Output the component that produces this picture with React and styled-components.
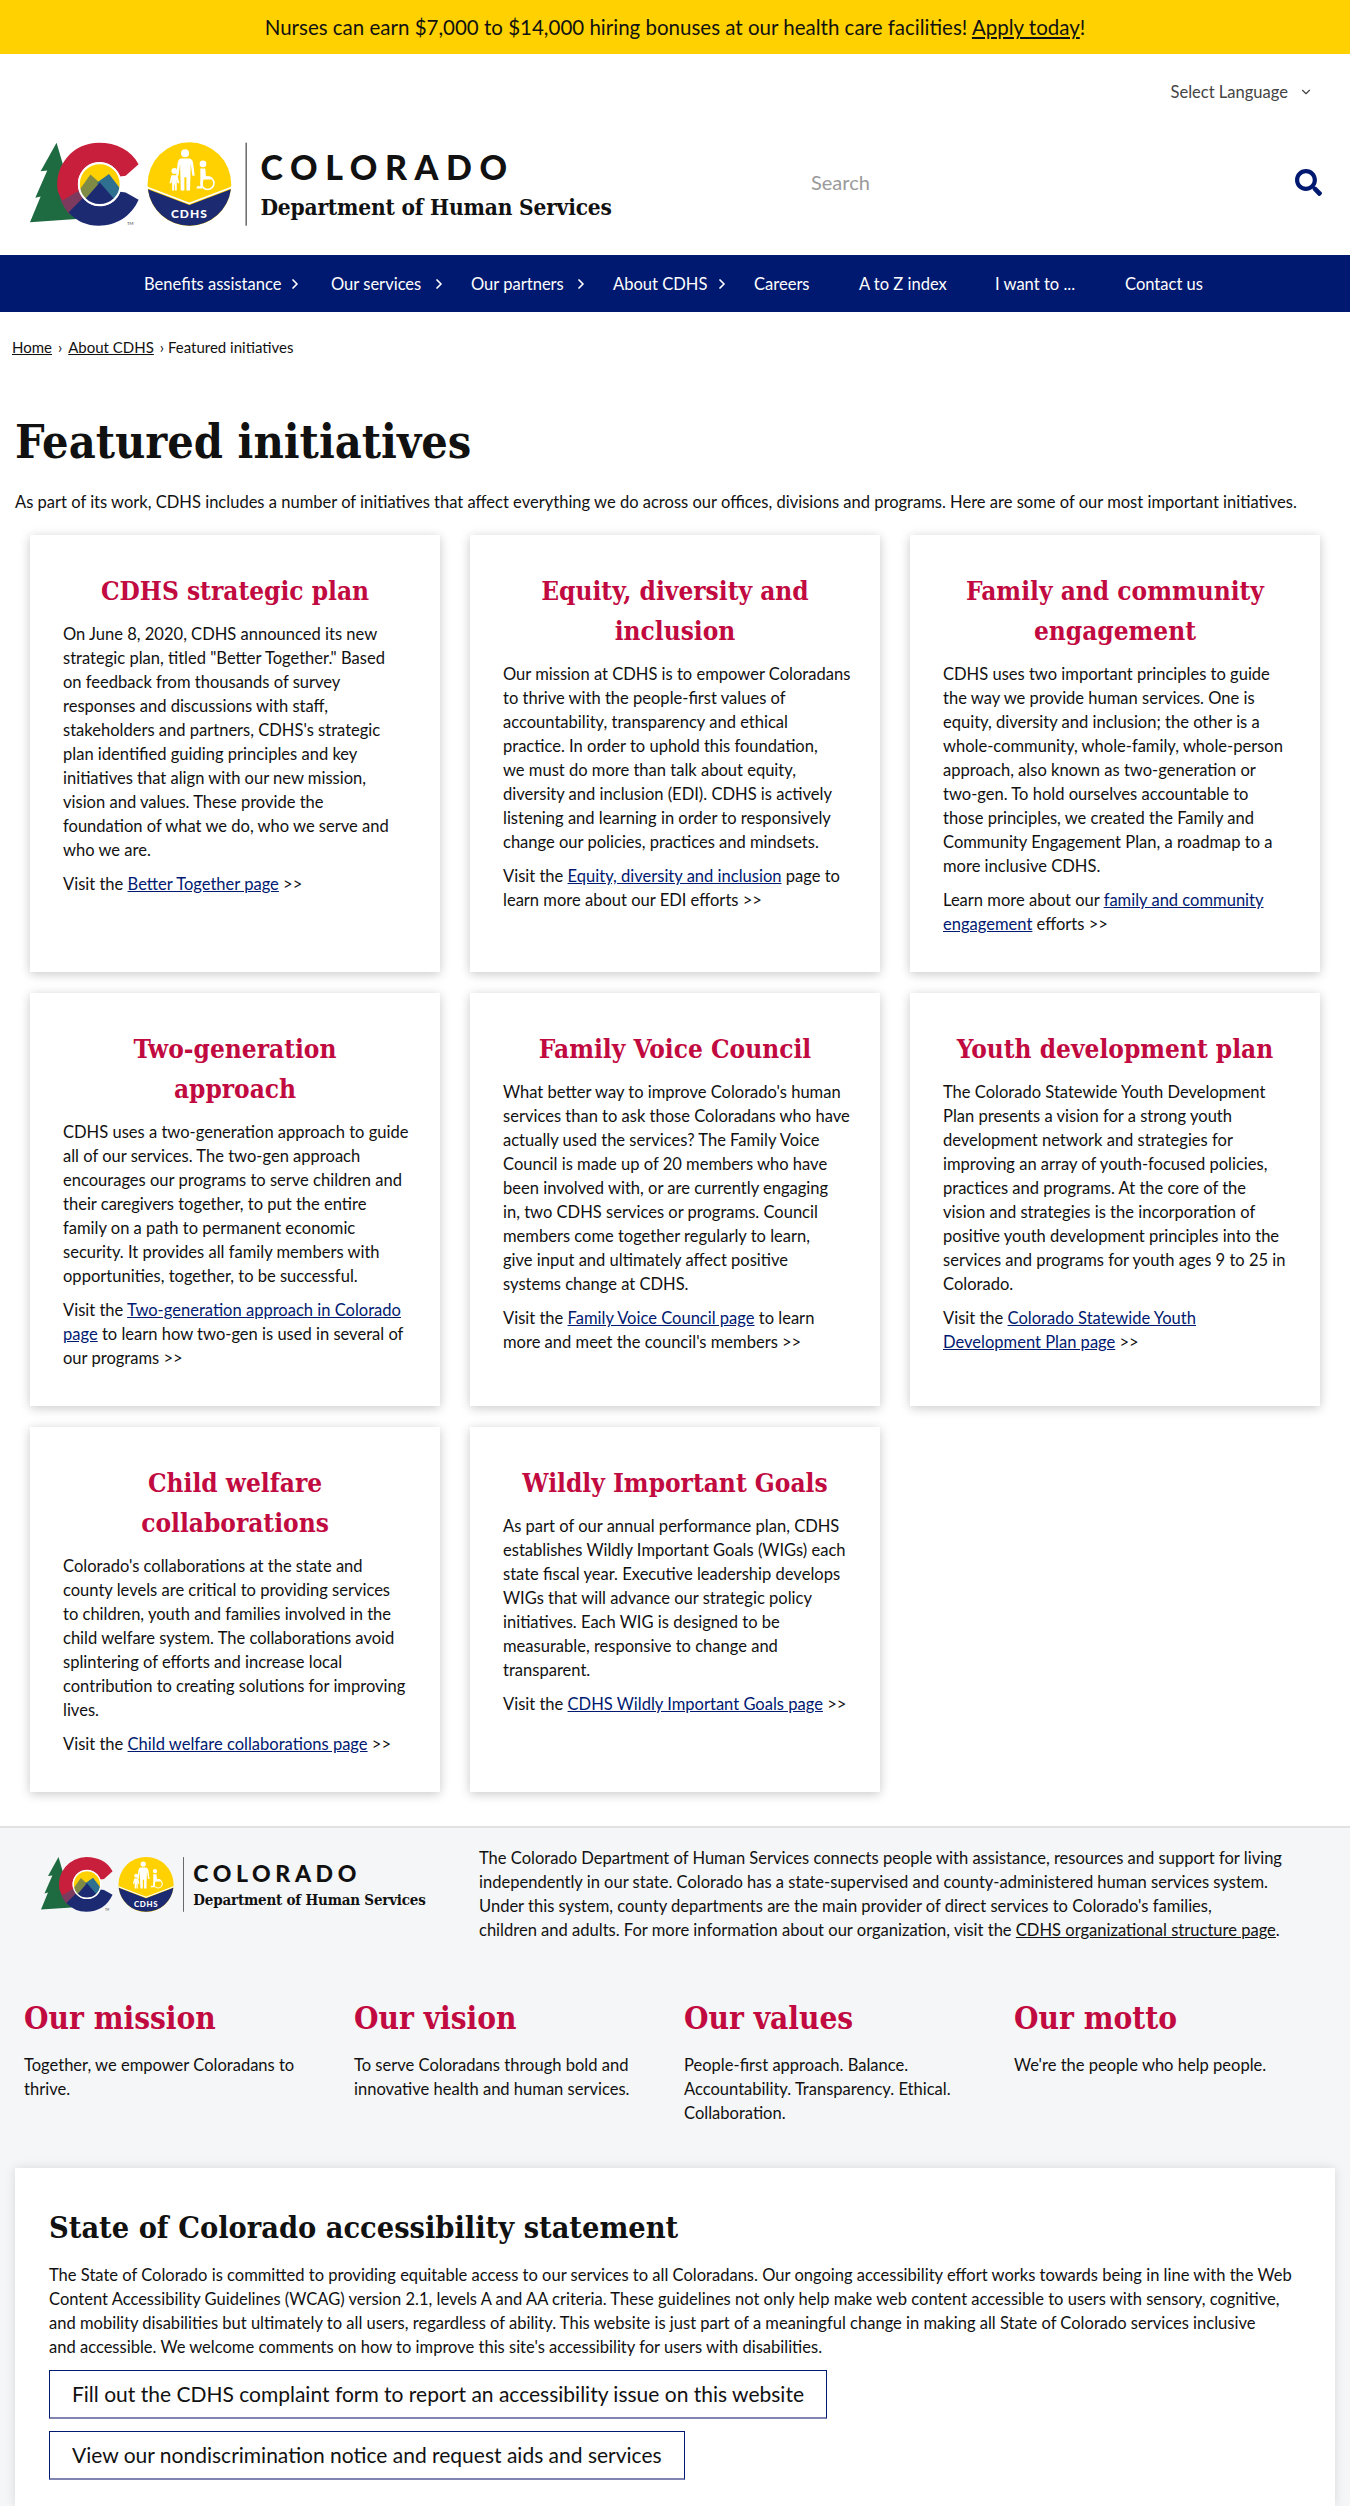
import React from 'react'
import styled, { createGlobalStyle } from 'styled-components'
import { ChevronDown, ChevronRight } from 'lucide-react'
import { FaSearch } from 'react-icons/fa'

const NAVY = '#001970'
const RED = '#c10a3f'
const BODY_FONT = '"Lato", "Noto Sans", sans-serif'
const SLAB_FONT = '"DejaVu Serif Condensed", "DejaVu Serif", serif'

const GlobalStyle = createGlobalStyle`
html, body {
    margin: 0;
    padding: 0;
    background: #fff;
    color: #111;
    font-family: ${BODY_FONT};
    font-size: 16.55px;
    line-height: 24px;
}
* { box-sizing: border-box; }
`

const Banner = styled.div`
height: 54px;
background: #ffd100;
display: flex;
align-items: center;
justify-content: center;
font-size: 20.5px;
a { color: #111; }
`
const Header = styled.header`
height: 201px;
display: grid;
grid-template-columns: 781px 1fr;
grid-template-rows: 76px 1fr;
`
const LangRow = styled.div`
grid-column: 1 / 3;
display: flex;
justify-content: flex-end;
align-items: center;
gap: 11px;
padding: 0 37px 0 0;
height: 76px;
color: #444;
`
const SearchBox = styled.div`
display: flex;
align-items: center;
justify-content: space-between;
padding: 0 28px 0 30px;
margin-top: -2px;
height: 108px;
font-size: 20px;
color: #9a9a9a;
svg { color: ${NAVY}; }
`
const LogoRow = styled.div`
display: flex;
align-items: stretch;
gap: ${({ $small }) => ($small ? '9px' : '13px')};
height: ${({ $small }) => ($small ? '58px' : '88px')};
margin: ${({ $small }) => ($small ? '10px 0 0 41px' : '11px 0 0 30px')};
svg { height: 100%; width: auto; display: block; }
`
const LogoText = styled.div`
padding-top: ${({ $small }) => ($small ? '4px' : '7px')};
color: #111;
white-space: nowrap;
`
const LogoState = styled.div`
font-family: "Lato", sans-serif;
font-weight: 900;
font-size: ${({ $small }) => ($small ? '23px' : '34px')};
line-height: ${({ $small }) => ($small ? '26px' : '38px')};
letter-spacing: ${({ $small }) => ($small ? '4.6px' : '7.6px')};
`
const LogoDept = styled.div`
font-family: ${SLAB_FONT};
font-weight: 700;
font-size: ${({ $small }) => ($small ? '15px' : '22.5px')};
line-height: ${({ $small }) => ($small ? '28px' : '42px')};
letter-spacing: -0.2px;
`
const Nav = styled.nav`
height: 57px;
background: ${NAVY};
color: #fff;
display: flex;
align-items: center;
padding-left: 120px;
`
const NavItem = styled.a`
display: flex;
align-items: center;
justify-content: space-between;
padding: 0 ${({ $pr }) => $pr || 0}px 0 24px;
width: ${({ $w }) => $w}px;
white-space: nowrap;
svg { flex: none; }
`
const Crumbs = styled.div`
display: flex;
align-items: center;
gap: 6px;
padding: 0 12px;
height: 70px;
font-size: 15px;
a { color: #111; text-decoration: underline; }
`
const Title = styled.h1`
margin: 0;
padding: 32px 15px 0;
font-family: ${SLAB_FONT};
font-weight: 700;
font-size: 46.4px;
line-height: 56px;
`
const Intro = styled.p`
margin: 20px 15px 0;
white-space: nowrap;
`
const CardGrid = styled.div`
display: grid;
grid-template-columns: repeat(3, 410px);
column-gap: 30px;
row-gap: 21px;
padding: 21px 30px 0;
`
const Card = styled.article`
background: #fff;
padding: 36px 33px 26px;
box-shadow: 0 2px 10px rgba(0, 0, 0, 0.22);
`
const CardTitle = styled.h2`
margin: 0 0 11px;
padding: 0 6px;
text-align: center;
color: ${RED};
font-family: ${SLAB_FONT};
font-weight: 700;
font-size: 26px;
line-height: 40px;
`
const CardBody = styled.p`
margin: 0 0 10px;
white-space: pre;
`
const Para = styled.p`
margin: 0 0 10px;
a { color: ${NAVY}; }
`
const Footer = styled.footer`
margin-top: 34px;
background: #f5f6f7;
border-top: 2px solid #e2e2e2;
`
const FooterTop = styled.div`
display: grid;
grid-template-columns: 479px 850px;
padding-top: 18px;
a { color: #111; }
`
const About = styled.div`
white-space: pre-line;
`
const Columns = styled.div`
display: grid;
grid-template-columns: repeat(4, 330px);
padding: 56px 0 0 24px;
`
const Column = styled.div`
padding-right: 45px;
`
const ColumnTitle = styled.h3`
margin: 0 0 15px;
color: ${RED};
font-family: ${SLAB_FONT};
font-weight: 700;
font-size: 31.3px;
line-height: 40px;
`
const Statement = styled.section`
margin: 43px 15px 0;
background: #fff;
padding: 39px 34px 26px;
box-shadow: 0 0 10px rgba(0, 0, 0, 0.12);
`
const StatementTitle = styled.h2`
margin: 0 0 16px;
font-family: ${SLAB_FONT};
font-weight: 700;
font-size: 30.4px;
line-height: 40px;
`
const StatementText = styled.p`
margin: 0;
white-space: pre-line;
`
const ButtonLink = styled.a`
display: block;
width: fit-content;
margin-top: ${({ $first }) => ($first ? '11px' : '12px')};
padding: 0 22px;
height: 49px;
line-height: 46px;
font-size: 21px;
color: #111;
background: #fff;
border: 1px solid ${NAVY};
border-bottom: 2px solid #7f85b0;
`

// c + cdhs seal, coords come from a 3x crop of the header
const Mark = ({ uid }) => (
    <svg viewBox="30 35 655 265" role="img" aria-label="Colorado logo">
        <defs>
            <clipPath id={uid}><circle cx="240" cy="165" r="62" /></clipPath>
        </defs>
        <path fill="#1f6b41" d="M110 40 L134 122 L170 270 L30 280 L62 202 L46 206 L82 124 L62 126 Z" />
        <path fill="#7b3a5e" d="M116 190 L180 180 L192 215 L150 258 Q124 228 116 190 Z" />
        <path fill="#c8203c" d="M357 105 C335 62 290 40 237 40 A125 125 0 0 0 114 188 L128 214 L178 184 A64 64 0 0 1 301 142 L318 140 Z" />
        <path fill="#1c2a72" d="M357 212 C335 262 290 290 237 290 A125 125 0 0 1 146 250 L190 206 A64 64 0 0 0 302 188 L318 190 Z" />
        <g clipPath={`url(#${uid})`}>
            <rect x="170" y="100" width="140" height="130" fill="#ffd100" />
            <path fill="#7f8b45" d="M170 195 L212 136 L250 170 L230 240 L170 240 Z" />
            <path fill="#2f6f8f" d="M232 160 L268 134 L310 190 L310 240 L260 240 Z" />
            <path fill="#1c2a72" d="M170 240 L240 160 L310 240 Z" />
        </g>
        <circle cx="240" cy="165" r="63" fill="none" stroke="#fff" strokeWidth="6" />
        <text x="322" y="288" fontSize="13" fontFamily="Lato, sans-serif" fill="#444">TM</text>

        <circle cx="510" cy="165" r="126" fill="#ffd100" />
        <path fill="#1c2a72" d="M385 180 L510 228 L635 180 A126 126 0 0 1 385 180 Z" />
        <path fill="none" stroke="#fff" strokeWidth="5" d="M384 175 L510 223 L636 175" />
        <g fill="#fff">
            <circle cx="497" cy="72" r="12" />
            <path d="M484 88 H510 Q519 90 521 100 L526 140 H519 L514 104 L512 184 H501 V144 H495 V184 H484 L482 104 L477 140 H470 L475 100 Q477 90 484 88 Z" />
            <circle cx="465" cy="125" r="9" />
            <path d="M456 138 H474 L480 162 H474 L472 150 V184 H466 V166 H464 V184 H458 V150 L456 162 H450 Z" />
            <circle cx="551" cy="104" r="10" />
            <path d="M543 118 H558 L560 144 H578 V151 H552 L549 178 H531 L533 171 H543 Z" />
        </g>
        <circle cx="565" cy="162" r="19" fill="none" stroke="#fff" strokeWidth="5" />
        <text x="510" y="268" textAnchor="middle" fontSize="36" fontWeight="900" fontFamily="Lato, sans-serif" letterSpacing="3" fill="#fff">CDHS</text>
        <rect x="679" y="40" width="4" height="250" fill="#555" />
    </svg>
)

const Logo = ({ small, uid }) => (
    <LogoRow $small={small}>
        <Mark uid={uid} />
        <LogoText $small={small}>
            <LogoState $small={small}>COLORADO</LogoState>
            <LogoDept $small={small}>Department of Human Services</LogoDept>
        </LogoText>
    </LogoRow>
)

const navItems = [
    { name: 'Benefits assistance', w: 187, pr: 4, more: true },
    { name: 'Our services', w: 140, more: true },
    { name: 'Our partners', w: 142, more: true },
    { name: 'About CDHS', w: 141, more: true },
    { name: 'Careers', w: 105 },
    { name: 'A to Z index', w: 136 },
    { name: 'I want to ...', w: 130 },
    { name: 'Contact us', w: 130 },
]

const cards = [
    {
        title: 'CDHS strategic plan',
        body: 'On June 8, 2020, CDHS announced its new\nstrategic plan, titled "Better Together." Based\non feedback from thousands of survey\nresponses and discussions with staff,\nstakeholders and partners, CDHS\'s strategic\nplan identified guiding principles and key\ninitiatives that align with our new mission,\nvision and values. These provide the\nfoundation of what we do, who we serve and\nwho we are.',
        link: <>Visit the <a href="#a">Better Together page</a> &gt;&gt;</>,
    },
    {
        title: 'Equity, diversity and inclusion',
        body: 'Our mission at CDHS is to empower Coloradans\nto thrive with the people-first values of\naccountability, transparency and ethical\npractice. In order to uphold this foundation,\nwe must do more than talk about equity,\ndiversity and inclusion (EDI). CDHS is actively\nlistening and learning in order to responsively\nchange our policies, practices and mindsets.',
        link: <>Visit the <a href="#a">Equity, diversity and inclusion</a> page to learn more about our EDI efforts &gt;&gt;</>,
    },
    {
        title: 'Family and community engagement',
        body: 'CDHS uses two important principles to guide\nthe way we provide human services. One is\nequity, diversity and inclusion; the other is a\nwhole-community, whole-family, whole-person\napproach, also known as two-generation or\ntwo-gen. To hold ourselves accountable to\nthose principles, we created the Family and\nCommunity Engagement Plan, a roadmap to a\nmore inclusive CDHS.',
        link: <>Learn more about our <a href="#a">family and community engagement</a> efforts &gt;&gt;</>,
    },
    {
        title: 'Two-generation approach',
        body: 'CDHS uses a two-generation approach to guide\nall of our services. The two-gen approach\nencourages our programs to serve children and\ntheir caregivers together, to put the entire\nfamily on a path to permanent economic\nsecurity. It provides all family members with\nopportunities, together, to be successful.',
        link: <>Visit the <a href="#a">Two-generation approach in Colorado page</a> to learn how two-gen is used in several of our programs &gt;&gt;</>,
    },
    {
        title: 'Family Voice Council',
        body: 'What better way to improve Colorado\'s human\nservices than to ask those Coloradans who have\nactually used the services? The Family Voice\nCouncil is made up of 20 members who have\nbeen involved with, or are currently engaging\nin, two CDHS services or programs. Council\nmembers come together regularly to learn,\ngive input and ultimately affect positive\nsystems change at CDHS.',
        link: <>Visit the <a href="#a">Family Voice Council page</a> to learn more and meet the council's members &gt;&gt;</>,
    },
    {
        title: 'Youth development plan',
        body: 'The Colorado Statewide Youth Development\nPlan presents a vision for a strong youth\ndevelopment network and strategies for\nimproving an array of youth-focused policies,\npractices and programs. At the core of the\nvision and strategies is the incorporation of\npositive youth development principles into the\nservices and programs for youth ages 9 to 25 in\nColorado.',
        link: <>Visit the <a href="#a">Colorado Statewide Youth Development Plan page</a> &gt;&gt;</>,
    },
    {
        title: 'Child welfare collaborations',
        body: 'Colorado\'s collaborations at the state and\ncounty levels are critical to providing services\nto children, youth and families involved in the\nchild welfare system. The collaborations avoid\nsplintering of efforts and increase local\ncontribution to creating solutions for improving\nlives.',
        link: <>Visit the <a href="#a">Child welfare collaborations page</a> &gt;&gt;</>,
    },
    {
        title: 'Wildly Important Goals',
        body: 'As part of our annual performance plan, CDHS\nestablishes Wildly Important Goals (WIGs) each\nstate fiscal year. Executive leadership develops\nWIGs that will advance our strategic policy\ninitiatives. Each WIG is designed to be\nmeasurable, responsive to change and\ntransparent.',
        link: <>Visit the <a href="#a">CDHS Wildly Important Goals page</a> &gt;&gt;</>,
    },
]

const columns = [
    { title: 'Our mission', text: 'Together, we empower Coloradans to thrive.' },
    { title: 'Our vision', text: 'To serve Coloradans through bold and innovative health and human services.' },
    { title: 'Our values', text: 'People-first approach. Balance. Accountability. Transparency. Ethical. Collaboration.' },
    { title: 'Our motto', text: "We're the people who help people." },
]

const App = () => {
    return (
        <>
            <GlobalStyle />
            <Banner>
                <span>Nurses can earn $7,000 to $14,000 hiring bonuses at our health care facilities! <a href="#a">Apply today</a>!</span>
            </Banner>
            <Header>
                <LangRow>
                    Select Language
                    <ChevronDown size={14} />
                </LangRow>
                <Logo uid="logo-top" />
                <SearchBox>
                    Search
                    <FaSearch size={27} />
                </SearchBox>
            </Header>
            <Nav>
                {navItems.map((item) => (
                    <NavItem key={item.name} $w={item.w} $pr={item.pr}>
                        {item.name}
                        {item.more && <ChevronRight size={16} strokeWidth={2.6} />}
                    </NavItem>
                ))}
            </Nav>
            <Crumbs>
                <a href="#a">Home</a> › <a href="#a">About CDHS</a> › Featured initiatives
            </Crumbs>
            <Title>Featured initiatives</Title>
            <Intro>As part of its work, CDHS includes a number of initiatives that affect everything we do across our offices, divisions and programs. Here are some of our most important initiatives.</Intro>
            <CardGrid>
                {cards.map((card) => (
                    <Card key={card.title}>
                        <CardTitle>{card.title}</CardTitle>
                        <CardBody>{card.body}</CardBody>
                        <Para>{card.link}</Para>
                    </Card>
                ))}
            </CardGrid>
            <Footer>
                <FooterTop>
                    <Logo small uid="logo-bottom" />
                    <About>
                        {"The Colorado Department of Human Services connects people with assistance, resources and support for living\nindependently in our state. Colorado has a state-supervised and county-administered human services system.\nUnder this system, county departments are the main provider of direct services to Colorado's families,\nchildren and adults. For more information about our organization, visit the "}<a href="#a">CDHS organizational structure page</a>.
                    </About>
                </FooterTop>
                <Columns>
                    {columns.map((col) => (
                        <Column key={col.title}>
                            <ColumnTitle>{col.title}</ColumnTitle>
                            {col.text}
                        </Column>
                    ))}
                </Columns>
                <Statement>
                    <StatementTitle>State of Colorado accessibility statement</StatementTitle>
                    <StatementText>
                        {"The State of Colorado is committed to providing equitable access to our services to all Coloradans. Our ongoing accessibility effort works towards being in line with the Web\nContent Accessibility Guidelines (WCAG) version 2.1, levels A and AA criteria. These guidelines not only help make web content accessible to users with sensory, cognitive,\nand mobility disabilities but ultimately to all users, regardless of ability. This website is just part of a meaningful change in making all State of Colorado services inclusive\nand accessible. We welcome comments on how to improve this site's accessibility for users with disabilities."}
                    </StatementText>
                    <ButtonLink $first>Fill out the CDHS complaint form to report an accessibility issue on this website</ButtonLink>
                    <ButtonLink>View our nondiscrimination notice and request aids and services</ButtonLink>
                </Statement>
            </Footer>
        </>
    )
}

export default App
